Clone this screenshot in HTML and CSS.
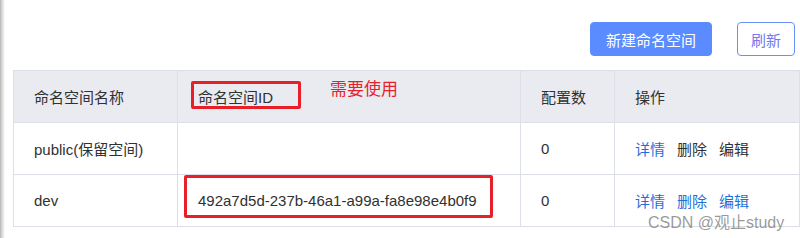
FILE: index.html
```html
<!DOCTYPE html>
<html>
<head>
    <meta charset="utf-8" />
    <title>命名空间</title>
    <link rel="stylesheet" href="styles.css">
</head>
<body>
    <div class="page">
        <div class="toolbar">
            <button class="btn btn-primary">新建命名空间</button>
            <button class="btn btn-plain">刷新</button>
        </div>
        <table class="ns-table">
            <colgroup>
                <col class="c-name">
                <col class="c-id">
                <col class="c-count">
                <col class="c-ops">
            </colgroup>
            <thead>
                <tr>
                    <th>命名空间名称</th>
                    <th>命名空间ID</th>
                    <th>配置数</th>
                    <th>操作</th>
                </tr>
            </thead>
            <tbody>
                <tr>
                    <td>public(保留空间)</td>
                    <td></td>
                    <td>0</td>
                    <td class="ops"><a class="link">详情</a><a>删除</a><a>编辑</a></td>
                </tr>
                <tr>
                    <td>dev</td>
                    <td>492a7d5d-237b-46a1-a99a-fa8e98e4b0f9</td>
                    <td>0</td>
                    <td class="ops"><a class="link">详情</a><a class="link">删除</a><a class="link">编辑</a></td>
                </tr>
            </tbody>
        </table>

        <!-- annotations drawn on top of the screenshot -->
        <div class="mark mark-head"></div>
        <div class="note">需要使用</div>
        <div class="mark mark-id"></div>
        <div class="watermark">CSDN @观止study</div>
    </div>
</body>
</html>
```

FILE: styles.css
```css
body{
    margin: 0;
    font-family: "Liberation Sans", "Noto Sans CJK SC", sans-serif;
    color: #303133;
    background: linear-gradient(to right, #b4b4b4 0, #d8d8d8 2px, #f2f2f2 4px, #fff 5px);
}
.page{
    position: relative;
    width: 800px;
    height: 238px;
    overflow: hidden;
}
.toolbar{
    display: flex;
    justify-content: flex-end;
    gap: 25px;
    padding: 22px 5px 0 0;
    height: 48px;
}
.btn{
    height: 34px;
    border-radius: 4px;
    font-family: inherit;
    font-size: 15px;
    padding: 0;
    cursor: pointer;
}
.btn-primary{
    width: 122px;
    background: #5a8bff;
    border: 1px solid #5a8bff;
    color: #fff;
}
.btn-plain{
    width: 58px;
    background: #fff;
    border: 1px solid #6b90f5;
    color: #7479ee;
}
.ns-table{
    margin-left: 13px;
    border-collapse: collapse;
    table-layout: fixed;
    width: 786px;
    font-size: 15px;
}
.c-name{ width: 164px; }
.c-id{ width: 343px; }
.c-count{ width: 94px; }
.c-ops{ width: 185px; }
.ns-table th,
.ns-table td{
    border: 1px solid #dcdfe6;
    padding: 0 0 0 20px;
    text-align: left;
    white-space: nowrap;
}
.ns-table th{
    height: 51px;
    background: #e9ebf0;
    font-weight: normal;
    color: #303133;
}
.ns-table td{
    height: 51px;
}
.ops a{
    margin-right: 12px;
    color: #303133;
}
.ops a.link{
    color: #1f6fd8;
}
.mark{
    position: absolute;
    border: 3px solid #e61f28;
    border-radius: 2px;
    box-sizing: border-box;
}
.mark-head{
    left: 191px;
    top: 81px;
    width: 110px;
    height: 28px;
}
.mark-id{
    left: 184px;
    top: 175px;
    width: 309px;
    height: 43px;
}
.note{
    position: absolute;
    left: 330px;
    top: 75px;
    font-size: 17px;
    color: #e8202a;
}
.watermark{
    position: absolute;
    left: 648px;
    top: 209px;
    font-size: 16px;
    color: rgba(120, 120, 120, 0.75);
}
```
